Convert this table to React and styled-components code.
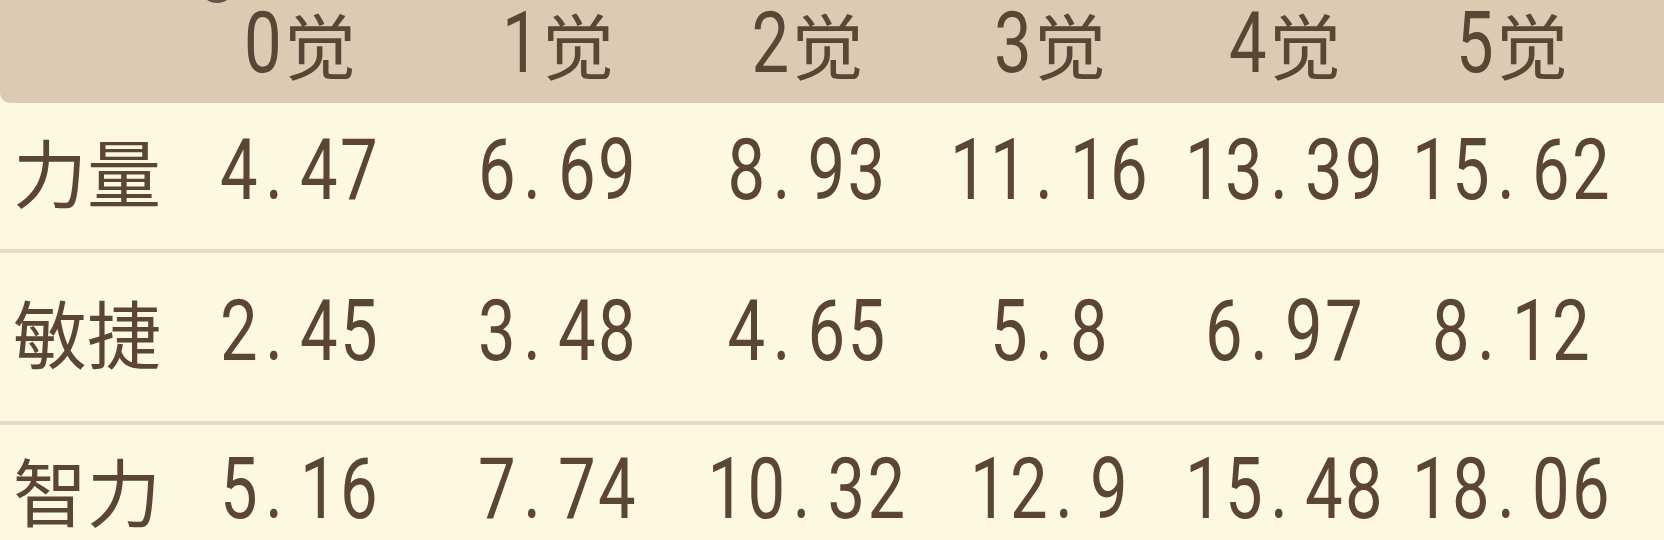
import React from 'react';
import styled, {createGlobalStyle} from 'styled-components';

const GlobalStyle = createGlobalStyle`
  html, body {
    margin: 0;
    padding: 0;
    background: #fdf9e1;
  }
  body {
    width: 1664px;
    height: 540px;
    overflow: hidden;
    font-family: "Noto Sans CJK SC", sans-serif;
    color: #5b4535;
  }
`;

const COLUMNS = '169px 262px 254px 245px 240px 230px 224px';

const Table = styled.div`
  position: relative;
  width: 1664px;
  height: 540px;
  overflow: hidden;
  background: #fdf9e1;
`;

const HeaderRow = styled.div`
  display: grid;
  grid-template-columns: ${COLUMNS};
  align-items: center;
  height: 103px;
  padding-bottom: 24px;
  box-sizing: border-box;
  background: #dccab2;
  border-bottom-left-radius: 10px;
`;

const Row = styled.div`
  display: grid;
  grid-template-columns: ${COLUMNS};
  align-items: center;
  height: ${p => p.$h}px;
  padding-bottom: 12px;
  box-sizing: border-box;

  & + & {
    border-top: 4px solid #e8dcc0;
  }
`;

const Label = styled.div`
  padding-left: 13px;
  font-size: 74px;
  line-height: 1.2;
  white-space: nowrap;
`;

const Cell = styled.div`
  display: flex;
  justify-content: center;
  align-items: center;
  white-space: nowrap;
`;

// the game font has tall, narrow digits: stretch Roboto vertically
const Num = styled.span`
  display: inline-block;
  font-family: Roboto, "Liberation Sans", sans-serif;
  font-size: 67px;
  line-height: 1.2;
  letter-spacing: 2.4px;
  transform: scaleY(1.26);
`;

// the decimal point takes a whole digit cell
const Dot = styled.span`
  display: inline-block;
  width: 40px;
  padding-right: 12px;
  box-sizing: border-box;
  text-align: center;
  letter-spacing: 0;
`;

const Kanji = styled.span`
  font-size: 72px;
  line-height: 1.2;
`;

// bottom of a dark round thing cut off by the top edge
const Knob = styled.div`
  position: absolute;
  left: 199px;
  top: -33px;
  width: 36px;
  height: 36px;
  border-radius: 50%;
  background: #66544a;
`;

const Value = ({v}) => {
  const [a, b] = v.split('.');
  return (
    <Num>
      {a}
      {b !== undefined && <Dot>.</Dot>}
      {b}
    </Num>
  );
};

const levels = ['0', '1', '2', '3', '4', '5'];

const rows = [
  {name: '力量', h: 146, values: ['4.47', '6.69', '8.93', '11.16', '13.39', '15.62']},
  {name: '敏捷', h: 172, values: ['2.45', '3.48', '4.65', '5.8', '6.97', '8.12']},
  {name: '智力', h: 144, values: ['5.16', '7.74', '10.32', '12.9', '15.48', '18.06']},
];

const App = () => {
  return (
    <Table>
      <GlobalStyle />
      <HeaderRow>
        <div />
        {levels.map(l => (
          <Cell key={l}>
            <Num>{l}</Num>
            <Kanji>觉</Kanji>
          </Cell>
        ))}
      </HeaderRow>
      {rows.map(r => (
        <Row key={r.name} $h={r.h}>
          <Label>{r.name}</Label>
          {r.values.map((v, i) => (
            <Cell key={i}><Value v={v} /></Cell>
          ))}
        </Row>
      ))}
      <Knob />
    </Table>
  );
};

export default App;
